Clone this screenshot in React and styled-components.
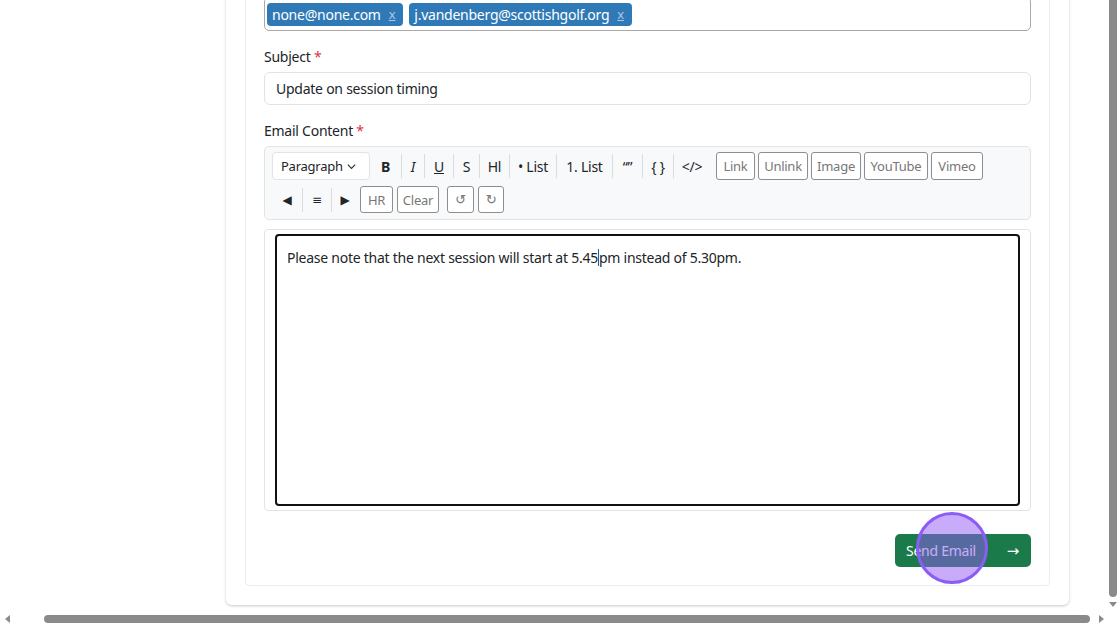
import React from "react"
import styled, { createGlobalStyle } from "styled-components"

const GlobalStyle = createGlobalStyle`
  html, body {
    margin: 0;
    padding: 0;
    background: #fff;
    overflow: hidden;
  }
  body {
    font-family: "Noto Sans", "Open Sans", sans-serif;
    font-size: 14px;
    letter-spacing: -0.25px;
    color: #212529;
  }
`

const Screen = styled.div`
  display: grid;
  grid-template-columns: 1108px 12px;
  grid-template-rows: 612px 14px;
  width: 1120px;
  height: 626px;
`

const Viewport = styled.div`
  overflow: hidden;
  background: #fff;
`

const OuterCard = styled.div`
  width: 843px;
  margin: -61px 0 0 226px;
  padding: 19px;
  box-sizing: border-box;
  background: #fff;
  border-radius: 6px;
  box-shadow: 0 1px 3px rgba(0, 0, 0, 0.22);
`

const InnerCard = styled.div`
  border: 1px solid #ececec;
  border-radius: 4px;
  padding: 38px 18px 18px;
`

const Form = styled.div`
  display: flex;
  flex-direction: column;
`

const RecipientsBox = styled.div`
  display: flex;
  align-items: center;
  gap: 6px;
  height: 34px;
  box-sizing: border-box;
  padding: 0 2px;
  border: 1px solid #a9a9a9;
  border-radius: 5px;
`

const Chip = styled.span`
  display: inline-flex;
  align-items: center;
  gap: 8px;
  height: 23px;
  padding: 0 8px 0 5px;
  background: #2f7ab6;
  color: #fff;
  border-radius: 4px;
  white-space: nowrap;
`

const ChipX = styled.span`
  color: #a9c8e6;
  text-decoration: underline;
  font-size: 13px;
`

const Label = styled.label`
  margin: 16px 0 5px;
  line-height: 20px;
`

const Req = styled.span`
  color: #dc3545;
`

const TextInput = styled.div`
  height: 33px;
  box-sizing: border-box;
  display: flex;
  align-items: center;
  padding: 0 11px;
  border: 1px solid #e2e2e2;
  border-radius: 6px;
`

const Toolbar = styled.div`
  display: flex;
  flex-direction: column;
  gap: 6px;
  padding: 5px 7px 6px;
  background: #f8f9fa;
  border: 1px solid #e3e3e3;
  border-radius: 5px;
`

const ToolRow = styled.div`
  display: flex;
  align-items: center;
  height: ${(p) => p.h}px;
`

const Select = styled.div`
  width: 98px;
  height: 28px;
  flex-shrink: 0;
  box-sizing: border-box;
  display: flex;
  align-items: center;
  justify-content: space-between;
  padding: 0 12px 0 8px;
  background: #fff;
  border: 1px solid #e3e3e3;
  border-radius: 4px;
  font-size: 13px;
`

const TextTool = styled.span`
  display: inline-flex;
  align-items: center;
  justify-content: center;
  flex-shrink: 0;
  width: ${(p) => p.w}px;
  height: 24px;
  box-sizing: border-box;
  white-space: nowrap;
  border-right: ${(p) => (p.last ? "none" : "1px solid #dcdcdc")};
  color: #212529;
  font-weight: ${(p) => (p.bold ? 700 : 400)};
  font-style: ${(p) => (p.italic ? "italic" : "normal")};
  text-decoration: ${(p) => (p.under ? "underline" : "none")};
  font-family: ${(p) => (p.sym ? '"DejaVu Sans", sans-serif' : "inherit")};
  font-size: ${(p) => (p.sym ? "12px" : "14px")};
`

const OutlineBtn = styled.span`
  display: inline-flex;
  align-items: center;
  justify-content: center;
  flex-shrink: 0;
  width: ${(p) => p.w}px;
  height: ${(p) => p.h || 27}px;
  box-sizing: border-box;
  border: 1px solid #8e8e8e;
  border-radius: 3px;
  background: #fff;
  color: #777;
  font-size: 13px;
  white-space: nowrap;
  font-family: ${(p) => (p.sym ? '"DejaVu Sans", sans-serif' : "inherit")};
`

const BtnGroup = styled.div`
  display: flex;
  gap: ${(p) => p.gap}px;
  margin-left: ${(p) => p.ml || 0}px;
`

const EditorWrap = styled.div`
  margin-top: 9px;
  padding: 4px 10px;
  border: 1px solid #e3e3e3;
  border-radius: 4px;
`

const Editor = styled.div`
  height: 272px;
  box-sizing: border-box;
  padding: 12px 10px;
  border: 2px solid #111;
  border-radius: 4px;
  line-height: 20px;
`

const Caret = styled.span`
  display: inline-block;
  width: 1px;
  height: 17px;
  background: #1a5fb4;
  vertical-align: -3px;
`

const Actions = styled.div`
  display: flex;
  justify-content: flex-end;
  margin-top: 23px;
`

const SendWrap = styled.div`
  position: relative;
`

const SendButton = styled.button`
  display: flex;
  align-items: center;
  justify-content: space-between;
  width: 136px;
  height: 33px;
  padding: 0 12px 0 11px;
  border: none;
  border-radius: 5px;
  background: #1a7a4a;
  color: #fff;
  font-family: inherit;
  font-size: 14px;
  letter-spacing: -0.25px;
`

const Arrow = styled.span`
  font-family: "DejaVu Sans", sans-serif;
  font-size: 15px;
`

const ClickMark = styled.div`
  position: absolute;
  left: 21px;
  top: -22px;
  width: 66px;
  height: 66px;
  border-radius: 50%;
  border: 3px solid #8b5cf6;
  background: rgba(145, 90, 245, 0.5);
  pointer-events: none;
`

const VScroll = styled.div`
  width: 12px;
  height: 612px;
  box-sizing: border-box;
  padding-left: 1px;
  background: #fff;
  display: flex;
  flex-direction: column;
`

const VThumb = styled.div`
  width: 8px;
  min-width: 8px;
  height: 597px;
  flex-shrink: 0;
  background: #8a8a8a;
  border-radius: 0 0 4px 4px;
`

const DownArrow = styled.div`
  width: 0;
  height: 0;
  margin: 5px 0 0 0;
  border-style: solid;
  border-color: #8a8a8a transparent transparent transparent;
  border-width: 5px 4px 0 4px;
`

const HScroll = styled.div`
  display: flex;
  align-items: center;
  padding: 0 4px 0 5px;
  background: #fff;
`

const SideArrow = styled.span`
  width: 0;
  height: 0;
  flex-shrink: 0;
  border-style: solid;
  border-color: transparent;
  ${(p) =>
    p.dir === "left"
      ? "border-width: 4px 5px 4px 0; border-right-color: #8a8a8a;"
      : "border-width: 4px 0 4px 5px; border-left-color: #8a8a8a;"}
`

const HThumb = styled.div`
  flex: 1;
  height: 8px;
  margin: 0 9px 0 34px;
  background: #8a8a8a;
  border-radius: 4px;
`

const Corner = styled.div`
  background: #fff;
`

const textTools = [
  { t: "B", bold: true, w: 32 },
  { t: "I", italic: true, w: 23 },
  { t: "U", under: true, w: 29 },
  { t: "S", w: 26 },
  { t: "Hl", w: 30 },
  { t: "• List", w: 47 },
  { t: "1. List", w: 56 },
  { t: "“”", w: 30 },
  { t: "{ }", w: 31 },
  { t: "</>", w: 36, last: true },
]

const mediaButtons = [
  { t: "Link", w: 39 },
  { t: "Unlink", w: 50 },
  { t: "Image", w: 50 },
  { t: "YouTube", w: 64 },
  { t: "Vimeo", w: 52 },
]

export default function App() {
  return (
    <>
      <GlobalStyle />
      <Screen>
        <Viewport>
          <OuterCard>
            <InnerCard>
              <Form>
                <RecipientsBox>
                  <Chip>
                    none@none.com <ChipX>x</ChipX>
                  </Chip>
                  <Chip>
                    j.vandenberg@scottishgolf.org <ChipX>x</ChipX>
                  </Chip>
                </RecipientsBox>

                <Label>
                  Subject <Req>*</Req>
                </Label>
                <TextInput>Update on session timing</TextInput>

                <Label>
                  Email Content <Req>*</Req>
                </Label>
                <Toolbar>
                  <ToolRow h={28}>
                    <Select>
                      Paragraph
                      <svg width="11" height="11" viewBox="0 0 12 12">
                        <path d="M2 4l4 4 4-4" fill="none" stroke="#333" strokeWidth="1.3" />
                      </svg>
                    </Select>
                    {textTools.map((b) => (
                      <TextTool key={b.t} {...b}>
                        {b.t}
                      </TextTool>
                    ))}
                    <BtnGroup gap={3} ml={6}>
                      {mediaButtons.map((m) => (
                        <OutlineBtn key={m.t} w={m.w} h={28}>
                          {m.t}
                        </OutlineBtn>
                      ))}
                    </BtnGroup>
                  </ToolRow>
                  <ToolRow h={27}>
                    <TextTool sym w={31}>◀</TextTool>
                    <TextTool sym w={29}>≡</TextTool>
                    <TextTool sym w={26} last>▶</TextTool>
                    <BtnGroup gap={4} ml={2}>
                      <OutlineBtn w={33}>HR</OutlineBtn>
                      <OutlineBtn w={42}>Clear</OutlineBtn>
                    </BtnGroup>
                    <BtnGroup gap={4} ml={8}>
                      <OutlineBtn sym w={27}>↺</OutlineBtn>
                      <OutlineBtn sym w={26}>↻</OutlineBtn>
                    </BtnGroup>
                  </ToolRow>
                </Toolbar>

                <EditorWrap>
                  <Editor>
                    Please note that the next session will start at 5.45
                    <Caret />
                    pm instead of 5.30pm.
                  </Editor>
                </EditorWrap>

                <Actions>
                  <SendWrap>
                    <SendButton>
                      Send Email <Arrow>→</Arrow>
                    </SendButton>
                    <ClickMark />
                  </SendWrap>
                </Actions>
              </Form>
            </InnerCard>
          </OuterCard>
        </Viewport>
        <VScroll>
          <VThumb />
          <DownArrow />
        </VScroll>
        <HScroll>
          <SideArrow dir="left" />
          <HThumb />
          <SideArrow dir="right" />
        </HScroll>
        <Corner />
      </Screen>
    </>
  )
}
